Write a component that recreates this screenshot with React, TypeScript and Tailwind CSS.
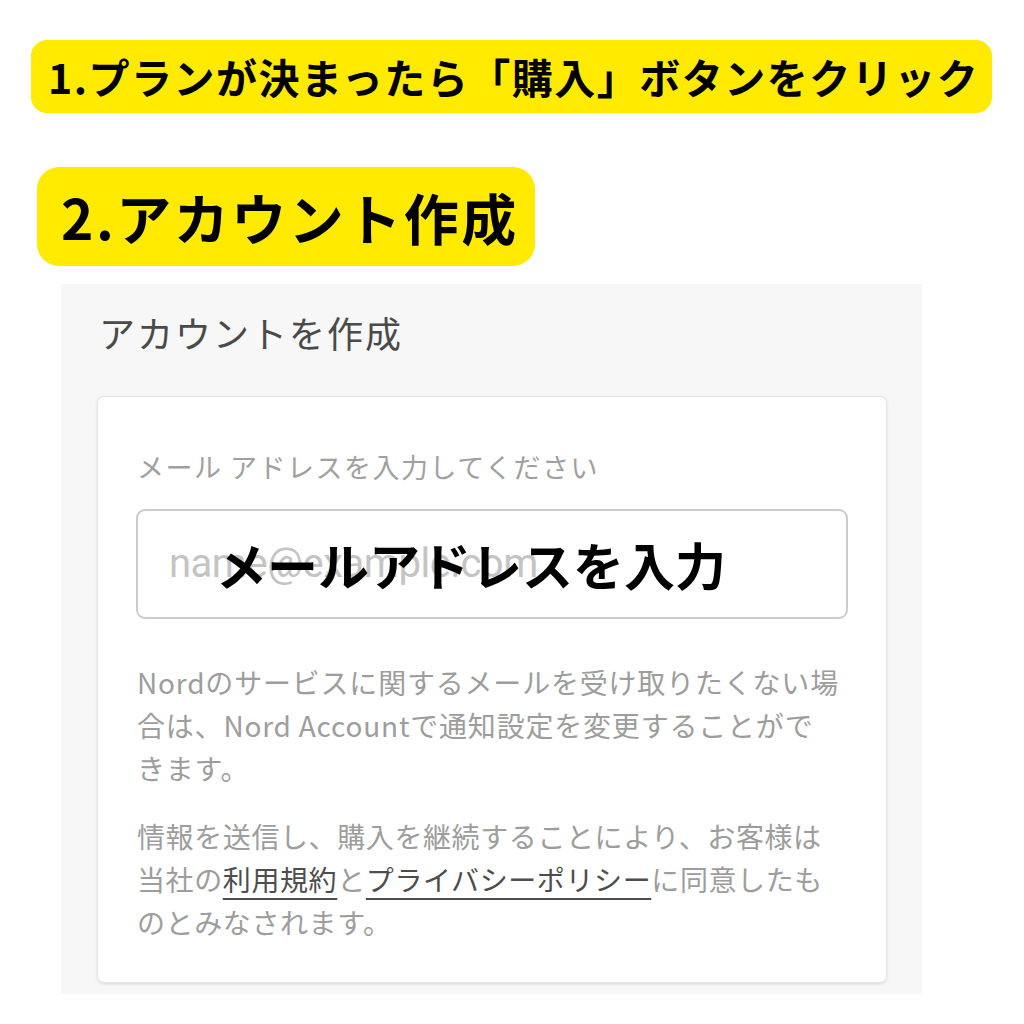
import React from "react";

export default function App() {
  const jp = { fontFamily: '"Noto Sans CJK JP", "Noto Sans", sans-serif' } as React.CSSProperties;
  return (
    <div className="w-[1024px] h-[1024px] bg-white relative overflow-hidden" style={jp}>
      <div className="flex flex-col">
        <div className="ml-[31px] mt-[40px] w-[961px] h-[73px] bg-[#ffea00] rounded-[16px] flex items-center pl-[17px]">
          <span className="text-[41px] font-bold text-black leading-none tracking-[1.5px] whitespace-nowrap">1.プランが決まったら「購入」ボタンをクリック</span>
        </div>
        <div className="ml-[37px] mt-[54px] w-[498px] h-[99px] bg-[#ffea00] rounded-[22px] flex items-center pl-[24px]">
          <span className="text-[55px] font-bold text-black leading-none tracking-[2.5px] whitespace-nowrap">2.アカウント作成</span>
        </div>
        <div className="ml-[61px] mt-[18px] w-[861px] h-[710px] bg-[#f7f7f7] flex flex-col">
          <div className="pl-[38px] pt-[22px] text-[36px] text-[#4a4a4a] leading-[52px] font-normal tracking-[2px]">アカウントを作成</div>
          <div className="ml-[36px] mt-[38px] w-[790px] h-[587px] bg-white rounded-[7px] border border-[#e6e6e6] shadow-[0_1px_3px_rgba(0,0,0,0.12)] flex flex-col px-[38px]">
            <div className="mt-[52px] ml-[1px] text-[27px] text-[#a0a0a0] leading-[36px] tracking-[1.5px]">メール アドレスを入力してください</div>
            <div className="relative mt-[24px] w-[712px] h-[110px] border-2 border-[#cccccc] rounded-[9px] flex items-center pl-[31px]">
              <span className="text-[40px] text-[#c4c4c4] tracking-[-0.5px]" style={{ fontFamily: '"Roboto", "Noto Sans", sans-serif' }}>name@example.com</span>
              <span className="absolute left-[78px] top-[22px] text-[51px] font-bold text-black leading-[62px] whitespace-nowrap">メールアドレスを入力</span>
            </div>
            <p className="mt-[42px] ml-[1px] text-[28px] text-[#9d9d9d] leading-[43px] tracking-[0.8px] whitespace-nowrap">
              Nordのサービスに関するメールを受け取りたくない場<br />
              合は、Nord Accountで通知設定を変更することがで<br />
              きます。
            </p>
            <p className="mt-[25px] ml-[1px] text-[28px] text-[#9d9d9d] leading-[43px] tracking-[0.6px] whitespace-nowrap">
              情報を送信し、購入を継続することにより、お客様は<br />
              当社の<span className="text-[#4d4d4d] underline underline-offset-[7px] decoration-2">利用規約</span>と<span className="text-[#4d4d4d] underline underline-offset-[7px] decoration-2">プライバシーポリシー</span>に同意したも<br />
              のとみなされます。
            </p>
          </div>
        </div>
      </div>
    </div>
  );
}
